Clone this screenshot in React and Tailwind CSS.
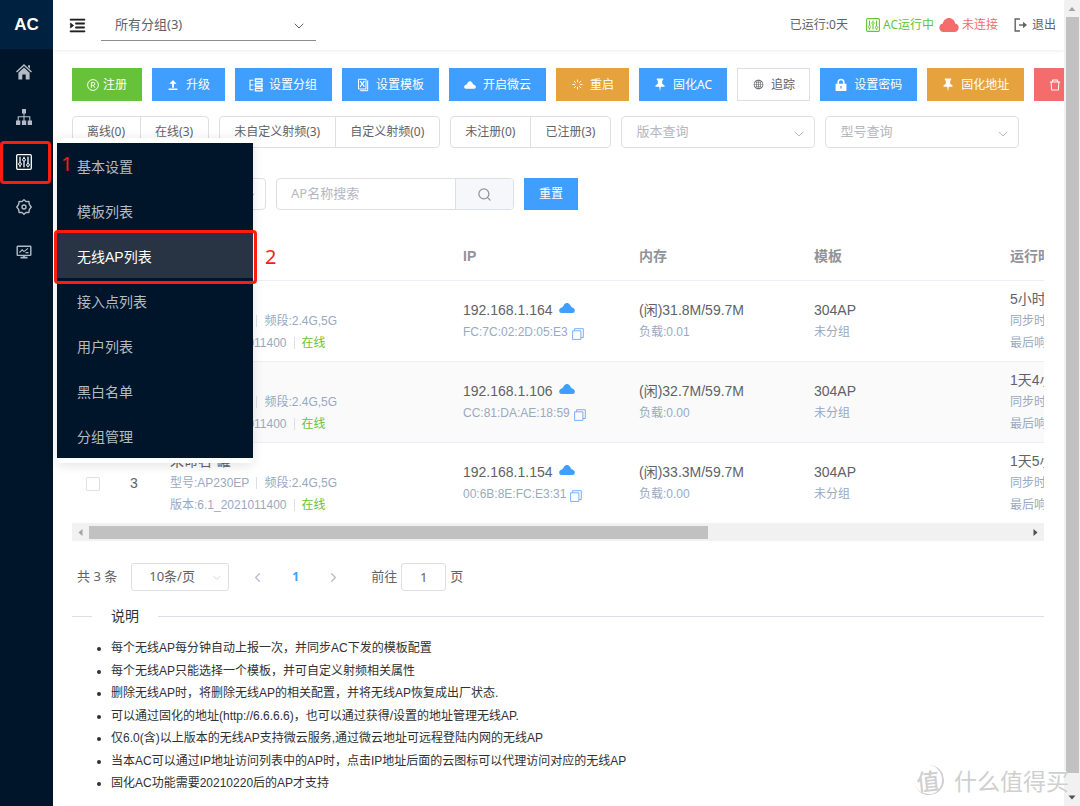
import React, { useState } from 'react';
import { AiOutlineDelete, AiOutlineGlobal, AiOutlineMenuUnfold } from 'react-icons/ai';
import { ChevronDown, ChevronLeft, ChevronRight, Loader, Search } from 'lucide-react';

const HomeIcon = () => (
  <svg viewBox="0 0 16 16" className="w-4 h-4" fill="currentColor">
    <path d="M8 0 16 7.500l-1 1.100L8 2.100 1 8.600 0 7.500zM12 1.200h2v3.500l-2-1.900z" />
    <path d="M8 3.400 13.600 8.700V15.500H9.700V10.500H6.300v5H2.400V8.700z" />
  </svg>
);

const SitemapIcon = () => (
  <svg viewBox="0 0 16 16" className="w-4 h-4" fill="currentColor">
    <path d="M6 0h4v4.500H6zM0 11.500h4.300V16H0zM5.900 11.500h4.300V16H5.900zM11.700 11.500H16V16h-4.300z" />
    <path d="M8 4v8M2.200 12V7.800h11.600V12" fill="none" stroke="currentColor" strokeWidth="1.100" />
  </svg>
);

const SlidersIcon = ({ className }) => (
  <svg viewBox="0 0 16 16" className={className} fill="none" stroke="currentColor">
    <rect x="0.700" y="0.700" width="14.600" height="14.600" rx="1.200" strokeWidth="1.300" />
    <path d="M4 2.800v5.700M4 11.500v1.700M8 2.800v1.500M8 7.300v5.900M12 2.800v6.700M12 12.300v1" strokeWidth="1.300" />
    <circle cx="4" cy="10" r="1.400" />
    <circle cx="8" cy="5.800" r="1.400" />
    <circle cx="12" cy="10.900" r="1.400" />
  </svg>
);

const GearIcon = () => (
  <svg viewBox="0 0 16 16" className="w-4 h-4" fill="none" stroke="currentColor" strokeWidth="1.400" strokeLinejoin="round">
    <path d="M8 .8 10 2.600l2.900-.1.400 2.800L15.200 8l-1.900 2.600-.4 2.900-2.900-.1L8 15.200l-2-1.800-2.900.1-.4-2.900L.8 8l1.900-2.700.4-2.800 2.900.1z" />
    <circle cx="8" cy="8" r="2" />
  </svg>
);

const MonitorIcon = () => (
  <svg viewBox="0 0 16 16" className="w-4 h-4" fill="none" stroke="currentColor">
    <rect x="1.2" y="2.2" width="13.6" height="9.2" rx="0.6" strokeWidth="1.4" />
    <path d="m3.500 8.500 2.700-2.700L8 7.600l4-3.200M9.500 8.600h3" strokeWidth="1.1" />
    <path d="M4.500 13.600h7M8 11.500v2" strokeWidth="1.8" />
  </svg>
);

const RegisteredIcon = () => (
  <svg viewBox="0 0 12 12" className="w-3 h-3" fill="none" stroke="currentColor">
    <circle cx="6" cy="6" r="5.4" />
    <path d="M4.4 8.8V3.4h2a1.4 1.4 0 0 1 0 2.9h-2M6.3 6.3l1.6 2.5" />
  </svg>
);

const UploadIcon = () => (
  <svg viewBox="0 0 12 12" className="w-3 h-3" fill="currentColor">
    <path d="M6 1 9.600 4.800H7v4H5v-4H2.400zM1.600 9.600h8.800v1.400H1.600z" />
  </svg>
);

const GroupIcon = () => (
  <svg viewBox="0 0 14 14" className="w-3.5 h-3.5" fill="none" stroke="currentColor">
    <path d="M4.500 2.200H1v9.600h3.500M1 7h3.500" strokeWidth="1.1" />
    <path d="M6.500 1h6.500v2.700H6.500zM6.500 5.600h6.500v2.700H6.500zM6.500 10.200h6.500v2.700H6.500z" strokeWidth="1.4" />
  </svg>
);

const TemplateIcon = () => (
  <svg viewBox="0 0 12 13" className="w-3 h-3.5" fill="none" stroke="currentColor">
    <path d="M1.500.8h7.500v9.700h-7.500zM10.700 2v10.200H3.200" />
    <path d="m3 8.500 2-3M3.200 2.600l4.200 5.600M7.400 2.400 5.400 5.500" strokeWidth="1.2" />
  </svg>
);

const FlatCloud = ({ className }) => (
  <svg viewBox="0 0 16 10" className={className} fill="currentColor">
    <path d="M2.500 10A2.500 2.500 0 0 1 .2 7.300C.2 5.800 1.600 5 3.200 4.300 4.300 3.700 4.400 2.600 5.200 1.500 6 .5 7 0 8 0s2 .5 2.800 1.500c.8 1.100.9 2.200 2 2.800 1.600.7 3 1.500 3 3A2.500 2.500 0 0 1 13.500 10z" />
  </svg>
);

const StatusCloud = () => (
  <svg viewBox="0 0 20 14" className="w-5 h-3.5" fill="currentColor">
    <path d="M4.500 14a4.300 4.300 0 0 1-.7-8.500C4.500 2.300 7 0 10 0s5.600 2.300 6.200 5.500A4.300 4.300 0 0 1 15.500 14z" />
  </svg>
);

const PinIcon = () => (
  <svg viewBox="0 0 12 14" className="w-3 h-3.5" fill="currentColor">
    <path d="M2.800.4h6.400v1.500l-1 .5v3.400l2.300 1.600v1.300H6.800L6 13.600l-.8-4.900H1.500V7.400l2.300-1.600V2.400l-1-.5z" />
  </svg>
);

const LockIcon = () => (
  <svg viewBox="0 0 12 13" className="w-3 h-3.5" fill="none">
    <path d="M3.200 6V3.800a2.800 2.800 0 0 1 5.600 0V6" stroke="currentColor" strokeWidth="1.500" />
    <path d="M.6 5.200h10.800v7.300H.6zM5.400 7.500v2.600h1.200V7.500z" fill="currentColor" fillRule="evenodd" />
  </svg>
);

const LogoutIcon = () => (
  <svg viewBox="0 0 14 14" className="w-3.5 h-3.5" fill="none" stroke="currentColor" strokeWidth="1.4">
    <path d="M6 1H1.200v12H6" />
    <path d="M5 7h5.500" />
    <path d="M9 3.800 13 7l-4 3.200z" fill="currentColor" stroke="none" />
  </svg>
);

const CopyIcon = () => (
  <svg viewBox="0 0 12 12" className="w-3 h-3" fill="none" stroke="currentColor">
    <path d="M.6 2.800h8.300v8.600H.6z" />
    <path d="M2.600 2.800V.7h8.700v8.800H9" />
  </svg>
);

const NAV = [
  { label: '首页', icon: <HomeIcon /> },
  { label: '网络', icon: <SitemapIcon /> },
  { label: '无线', icon: <SlidersIcon className="w-4 h-4 text-white" /> },
  { label: '设置', icon: <GearIcon /> },
  { label: '监控', icon: <MonitorIcon /> },
];

const MENU = ['基本设置', '模板列表', '无线AP列表', '接入点列表', '用户列表', '黑白名单', '分组管理'];

const BLUE = 'bg-[#409eff] border-[#409eff] text-white gap-[7px]';
const ORANGE = 'bg-[#e6a23c] border-[#e6a23c] text-white gap-[7px]';

const ACTIONS = [
  { label: '注册', icon: <RegisteredIcon />, tone: 'bg-[#67c23a] border-[#67c23a] text-white gap-1' },
  { label: '升级', icon: <UploadIcon />, tone: BLUE },
  { label: '设置分组', icon: <GroupIcon />, tone: BLUE },
  { label: '设置模板', icon: <TemplateIcon />, tone: BLUE },
  { label: '开启微云', icon: <FlatCloud className="w-3 h-2" />, tone: BLUE },
  { label: '重启', icon: <Loader size={11} />, tone: ORANGE },
  { label: '固化AC', icon: <PinIcon />, tone: BLUE },
  { label: '追踪', icon: <AiOutlineGlobal size={11} />, tone: 'bg-white border-[#dcdfe6] text-[#606266] gap-[7px]' },
  { label: '设置密码', icon: <LockIcon />, tone: BLUE },
  { label: '固化地址', icon: <PinIcon />, tone: ORANGE },
  { label: '删除', icon: <AiOutlineDelete size={14} />, tone: 'bg-[#f56c6c] border-[#f56c6c] text-white gap-[7px]' },
];

const FILTERS = [
  ['离线(0)', '在线(3)'],
  ['未自定义射频(3)', '自定义射频(0)'],
  ['未注册(0)', '已注册(3)'],
];

const ROWS = [
  { ip: '192.168.1.164', mac: 'FC:7C:02:2D:05:E3', mem: '(闲)31.8M/59.7M', load: '0.01', uptime: '5小时' },
  { ip: '192.168.1.106', mac: 'CC:81:DA:AE:18:59', mem: '(闲)32.7M/59.7M', load: '0.00', uptime: '1天4小时' },
  { ip: '192.168.1.154', mac: '00:6B:8E:FC:E3:31', mem: '(闲)33.3M/59.7M', load: '0.00', uptime: '1天5小时' },
];

const NOTES = [
  '每个无线AP每分钟自动上报一次，并同步AC下发的模板配置',
  '每个无线AP只能选择一个模板，并可自定义射频相关属性',
  '删除无线AP时，将删除无线AP的相关配置，并将无线AP恢复成出厂状态.',
  '可以通过固化的地址(http://6.6.6.6)，也可以通过获得/设置的地址管理无线AP.',
  '仅6.0(含)以上版本的无线AP支持微云服务,通过微云地址可远程登陆内网的无线AP',
  '当本AC可以通过IP地址访问列表中的AP时，点击IP地址后面的云图标可以代理访问对应的无线AP',
  '固化AC功能需要20210220后的AP才支持',
];

const FilterSelect = ({ label }) => (
  <div className="relative w-[194px] shrink-0">
    <select aria-label={label} className="appearance-none w-full h-8 pl-[14px] pr-8 text-[13px] text-[#b4b8c0] bg-white border border-[#dcdfe6] rounded">
      <option>{label}</option>
    </select>
    <ChevronDown size={16} strokeWidth={1.5} className="absolute right-2 top-[10px] text-[#b4b8c0] pointer-events-none" />
  </div>
);

const Sidebar = () => (
  <aside className="w-[53px] shrink-0 bg-[#001529]">
    <div className="h-[49px] bg-[#002140] flex items-center justify-center text-white text-[17px] font-bold font-['Liberation_Sans',sans-serif]">AC</div>
    <nav>
      {NAV.map((item) => (
        <a key={item.label} href="#" aria-label={item.label} className="h-[45px] w-[47px] flex items-center justify-center text-[#b3bcc5]">
          {item.icon}
        </a>
      ))}
    </nav>
  </aside>
);

const Header = () => (
  <header className="h-[50px] shrink-0 flex items-center pl-[15px] pr-2 bg-white text-xs text-[#606266] shadow-[0_1px_4px_rgba(0,21,41,0.08)]">
    <button aria-label="展开菜单" className="text-[#222] [&_path]:stroke-current [&_path]:stroke-30"><AiOutlineMenuUnfold size={19} /></button>
    <div className="relative ml-[14px] w-[215px]">
      <select aria-label="分组" className="appearance-none w-full h-8 pl-[14px] text-[13px] bg-transparent border-b border-[#8c8c8c]">
        <option>所有分组(3)</option>
      </select>
      <ChevronDown size={16} strokeWidth={1.5} className="absolute right-[9px] top-[9px] pointer-events-none" />
    </div>
    <div className="ml-auto flex items-center whitespace-nowrap">
      <span className="mr-[18px]">已运行:0天</span>
      <span className="flex items-center gap-[3px] text-[#67c23a]"><SlidersIcon className="w-3.5 h-3.5" />AC运行中</span>
      <span className="ml-[5px] flex items-center gap-[3px] text-[#f56c6c]"><StatusCloud />未连接</span>
      <a href="#" className="ml-4 flex items-center gap-1"><LogoutIcon />退出</a>
    </div>
  </header>
);

const ApTable = () => (
  <div>
    <div className="overflow-hidden font-['Liberation_Sans','Noto_Sans_CJK_SC',sans-serif]">
      <table className="table-fixed w-[1478px] text-left text-sm leading-[22px] text-[#606266]">
        <colgroup>
          <col className="w-[42px]" />
          <col className="w-[46px]" />
          <col className="w-[293px]" />
          <col className="w-44" />
          <col className="w-[175px]" />
          <col className="w-49" />
          <col />
        </colgroup>
        <thead>
          <tr className="h-[47px] border-b border-[#ebeef5] text-[#909399]">
            <th className="text-center"><input type="checkbox" aria-label="全选" className="appearance-none align-middle w-3.5 h-3.5 border border-[#dcdfe6] rounded-xs" /></th>
            <th />
            <th />
            <th className="px-2.5">IP</th>
            <th className="px-2.5">内存</th>
            <th className="px-2.5">模板</th>
            <th className="px-2.5">运行时间</th>
          </tr>
        </thead>
        <tbody>
          {ROWS.map((row, i) => (
            <tr key={row.mac} className="h-[81px] border-b border-[#ebeef5] last:border-0 even:bg-[#fafafa]">
              <td className="text-center">
                <input type="checkbox" aria-label={row.ip} className="appearance-none align-middle w-3.5 h-3.5 bg-white border border-[#dcdfe6] rounded-xs" />
              </td>
              <td className="text-center pr-1.5">{i + 1}</td>
              <td className="px-2.5">
                <div>未命名-罐</div>
                <div className="flex items-center text-xs leading-[22px] text-[#99a9bf]">
                  型号:AP230EP<i className="w-px h-3 mx-[7px] bg-[#dcdfe6]" />频段:2.4G,5G
                </div>
                <div className="flex items-center text-xs leading-[22px] text-[#99a9bf]">
                  版本:6.1_2021011400<i className="w-px h-3 mx-[7px] bg-[#dcdfe6]" /><span className="text-[#67c23a]">在线</span>
                </div>
              </td>
              <td className="px-2.5">
                <div className="flex items-center gap-1.5">{row.ip}<FlatCloud className="w-4 h-2.5 mb-1 text-[#409eff]" /></div>
                <div className="flex items-center gap-1 text-xs leading-[22px] text-[#99a9bf]">
                  {row.mac}<button aria-label="复制" className="mt-1 text-[#79aefb]"><CopyIcon /></button>
                </div>
              </td>
              <td className="px-2.5">
                <div>{row.mem}</div>
                <div className="text-xs leading-[22px] text-[#99a9bf]">负载:{row.load}</div>
              </td>
              <td className="px-2.5">
                <div>304AP</div>
                <div className="text-xs leading-[22px] text-[#99a9bf]">未分组</div>
              </td>
              <td className="px-2.5">
                <div>{row.uptime}</div>
                <div className="text-xs leading-[22px] text-[#99a9bf]">同步时间</div>
                <div className="text-xs leading-[22px] text-[#99a9bf]">最后响应</div>
              </td>
            </tr>
          ))}
        </tbody>
      </table>
    </div>
    {/* horizontal scrollbar */}
    <div className="h-[18px] flex items-center bg-[#f1f1f1]">
      <svg viewBox="0 0 17 17" className="w-[17px] h-[17px]" fill="#a3a3a3"><path d="M10.500 5v7L6.500 8.500z" /></svg>
      <div className="flex-1"><div className="w-[66%] h-[13px] bg-[#c1c1c1]" /></div>
      <svg viewBox="0 0 17 17" className="w-[17px] h-[17px]" fill="#505050"><path d="M6.500 5v7l4-3.500z" /></svg>
    </div>
  </div>
);

const Pagination = () => (
  <div className="mt-[22px] pl-[5px] flex items-center text-[13px] text-[#606266]">
    <span>共 3 条</span>
    <div className="relative ml-[14px] w-[98px]">
      <select aria-label="每页条数" className="appearance-none w-full h-7 pl-[17px] bg-white border border-[#dcdfe6] rounded-[3px]">
        <option>10条/页</option>
      </select>
      <ChevronDown size={12} strokeWidth={1.5} className="absolute right-[6px] top-[9px] text-[#c0c4cc] pointer-events-none" />
    </div>
    <button aria-label="上一页" className="ml-[21px] text-[#b4bccc]"><ChevronLeft size={15} /></button>
    <button className="w-[61px] text-[#409eff] font-bold text-xs">1</button>
    <button aria-label="下一页" className="text-[#b4bccc]"><ChevronRight size={15} /></button>
    <label htmlFor="goto" className="ml-[30px]">前往</label>
    <input id="goto" defaultValue="1" className="mx-[4px] w-[45px] h-7 text-center border border-[#dcdfe6] rounded-[3px]" />
    <span>页</span>
  </div>
);

export default function App() {
  const [active, setActive] = useState('无线AP列表');
  const [name, setName] = useState('');

  return (
    <div className="relative flex h-screen overflow-hidden bg-white font-['Noto_Sans','Noto_Sans_CJK_SC',sans-serif]">
      <Sidebar />

      <div className="flex-1 min-w-0 flex flex-col overflow-hidden">
        <Header />
        <main className="pl-[19px] pr-5 pt-[18px]">
          <div className="flex gap-2.5 whitespace-nowrap">
            {ACTIONS.map((a) => (
              <button key={a.label} className={`shrink-0 h-[33px] px-[14px] border flex items-center text-xs ${a.tone}`}>
                <span className="w-3 flex justify-center [&>svg]:shrink-0">{a.icon}</span>
                {a.label}
              </button>
            ))}
          </div>

          <div className="mt-[15px] flex gap-2.5 whitespace-nowrap">
            {FILTERS.map((group) => (
              <div key={group[0]} className="flex shrink-0 h-8 border border-[#dcdfe6] rounded divide-x divide-[#dcdfe6] text-xs text-[#606266]">
                {group.map((f) => (
                  <button key={f} className="pl-[14px] pr-[15px]">{f}</button>
                ))}
              </div>
            ))}
            <FilterSelect label="版本查询" />
            <FilterSelect label="型号查询" />
          </div>

          <div className="mt-[30px] flex gap-2.5">
            <FilterSelect label="分组查询" />
            <div className="flex h-8 w-[238px] border border-[#dcdfe6] rounded overflow-hidden">
              <input
                aria-label="AP名称搜索"
                placeholder="AP名称搜索"
                value={name}
                onChange={(e) => setName(e.target.value)}
                className="flex-1 min-w-0 pl-[14px] text-[13px] placeholder:text-[#b4b8c0] outline-none"
              />
              <button aria-label="搜索" className="w-[58px] flex items-center justify-center border-l border-[#dcdfe6] bg-[#f5f7fa] text-[#909399]">
                <Search size={15} strokeWidth={2} />
              </button>
            </div>
            <button onClick={() => setName('')} className="h-8 px-[15px] bg-[#409eff] text-white text-xs">重置</button>
          </div>

          <div className="mt-[23px]">
            <ApTable />
          </div>
          <Pagination />

          <section className="mt-[15px] text-[#303133] font-['Liberation_Sans','Noto_Sans_CJK_SC',sans-serif]">
            <h2 className="flex items-center gap-[19px] text-sm">
              <span className="w-5 h-px bg-[#dcdfe6]" />
              说明
              <span className="flex-1 h-px bg-[#dcdfe6]" />
            </h2>
            <ul className="mt-3 pl-[39px] min-h-[155px] grid content-between list-disc text-xs leading-5">
              {NOTES.map((n) => <li key={n}>{n}</li>)}
            </ul>
          </section>
        </main>
      </div>

      {/* vertical scrollbar */}
      <div className="w-4 shrink-0 flex flex-col items-center bg-[#f1f1f1]">
        <svg viewBox="0 0 16 17" className="w-4 h-[17px]" fill="#a3a3a3"><path d="M4.500 11h7L8 7z" /></svg>
        <div className="w-[13px] flex-1 bg-[#c1c1c1]" />
        <svg viewBox="0 0 16 33" className="w-4 h-[33px]" fill="#505050"><path d="M4.500 22.500h7L8 26.500z" /></svg>
      </div>

      {/* flyout menu */}
      <div className="absolute left-[57px] top-[138px] w-[196px] py-[5px] bg-white rounded-sm shadow-[0_2px_12px_rgba(0,0,0,0.12)]">
        <ul className="bg-[#001529]">
          {MENU.map((m) => (
            <li key={m}>
              <a
                href="#"
                onClick={() => setActive(m)}
                className={`block pl-5 pt-[2px] h-[45px] leading-[45px] text-sm font-['Liberation_Sans','Noto_Sans_CJK_SC',sans-serif] ${m === active ? 'bg-[#283443] text-white' : 'text-[#b3bcc5]'}`}
              >
                {m}
              </a>
            </li>
          ))}
        </ul>
      </div>

      {/* step marks */}
      <div className="absolute left-0 top-[141px] w-[51px] h-[43px] border-[3px] border-[#fb1d10] rounded-sm" />
      <span className="absolute left-[61px] top-[150px] text-[20px] leading-7 text-[#fb1d10]">1</span>
      <div className="absolute left-[54px] top-[230px] w-[203px] h-[54px] border-[3px] border-[#fb1d10] rounded-sm" />
      <span className="absolute left-[265px] top-[243px] text-[20px] leading-7 text-[#fb1d10]">2</span>

      {/* watermark */}
      <div className="absolute right-[11px] bottom-[10px] flex items-center gap-2.5 text-[#cfcfcf] text-[23px] leading-8 font-['Noto_Sans_CJK_SC',sans-serif] [text-shadow:-1px_-1px_0_#fff]">
        <span className="w-[30px] h-[30px] flex items-center justify-center rounded-full border-r-2 border-b border-[#cfcfcf] -rotate-6 font-medium">值</span>
        什么值得买
      </div>
    </div>
  );
}
